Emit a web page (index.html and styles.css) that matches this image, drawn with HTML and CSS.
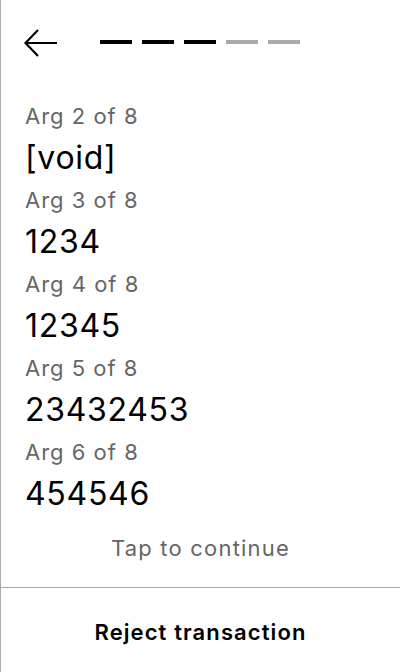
FILE: index.html
```
<!DOCTYPE html>
<html>
<head>
<meta charset="utf-8">
<link rel="stylesheet" href="styles.css">
</head>
<body>
<div class="screen">
  <div class="header">
    <svg class="back" width="34" height="30" viewBox="0 0 34 30">
      <path d="M14 2 L1.5 15 L14 28 M1.5 15 H33" fill="none" stroke="#000" stroke-width="2.2"/>
    </svg>
    <div class="steps">
      <span class="step on"></span>
      <span class="step on"></span>
      <span class="step on"></span>
      <span class="step"></span>
      <span class="step"></span>
    </div>
  </div>
  <div class="args">
    <div class="arg"><div class="label">Arg 2 of 8</div><div class="value">[void]</div></div>
    <div class="arg"><div class="label">Arg 3 of 8</div><div class="value">1234</div></div>
    <div class="arg"><div class="label">Arg 4 of 8</div><div class="value">12345</div></div>
    <div class="arg"><div class="label">Arg 5 of 8</div><div class="value">23432453</div></div>
    <div class="arg"><div class="label">Arg 6 of 8</div><div class="value">454546</div></div>
  </div>
  <div class="tap">Tap to continue</div>
  <div class="footer">Reject transaction</div>
</div>
</body>
</html>
```
FILE: styles.css
```
html, body { margin: 0; padding: 0; background: #fff; }
body { font-family: Inter, "Noto Sans", sans-serif; color: #000; }
.screen {
  width: 400px;
  height: 672px;
  box-sizing: border-box;
  border-left: 1px solid #aaa;
  display: flex;
  flex-direction: column;
  overflow: hidden;
}
.header {
  height: 98px;
  flex: none;
  display: flex;
  align-items: flex-start;
  padding-left: 23px;
  box-sizing: border-box;
}
.back { margin-top: 28px; display: block; }
.steps {
  display: flex;
  gap: 10px;
  margin-left: 42px;
  margin-top: 40px;
}
.step { width: 32px; height: 4px; background: #aaa; display: block; }
.step.on { background: #000; }
.args { padding-left: 24px; flex: none; }
.arg { display: flex; flex-direction: column; }
.label { font-size: 22px; line-height: 36px; height: 36px; color: #666; letter-spacing: 1px; }
.value { font-size: 32px; line-height: 44px; height: 44px; padding-top: 2px; padding-bottom: 2px; color: #000; letter-spacing: 0.7px; }
.tap {
  flex: none;
  height: 70px;
  line-height: 60px;
  text-align: center;
  font-size: 22px;
  letter-spacing: 1.2px;
  color: #666;
  border-bottom: 1px solid #aaa;
  box-sizing: border-box;
}
.footer {
  flex: 1;
  display: flex;
  align-items: center;
  justify-content: center;
  padding-top: 4px;
  font-size: 22px;
  font-weight: 600;
  letter-spacing: 1.1px;
}
```
